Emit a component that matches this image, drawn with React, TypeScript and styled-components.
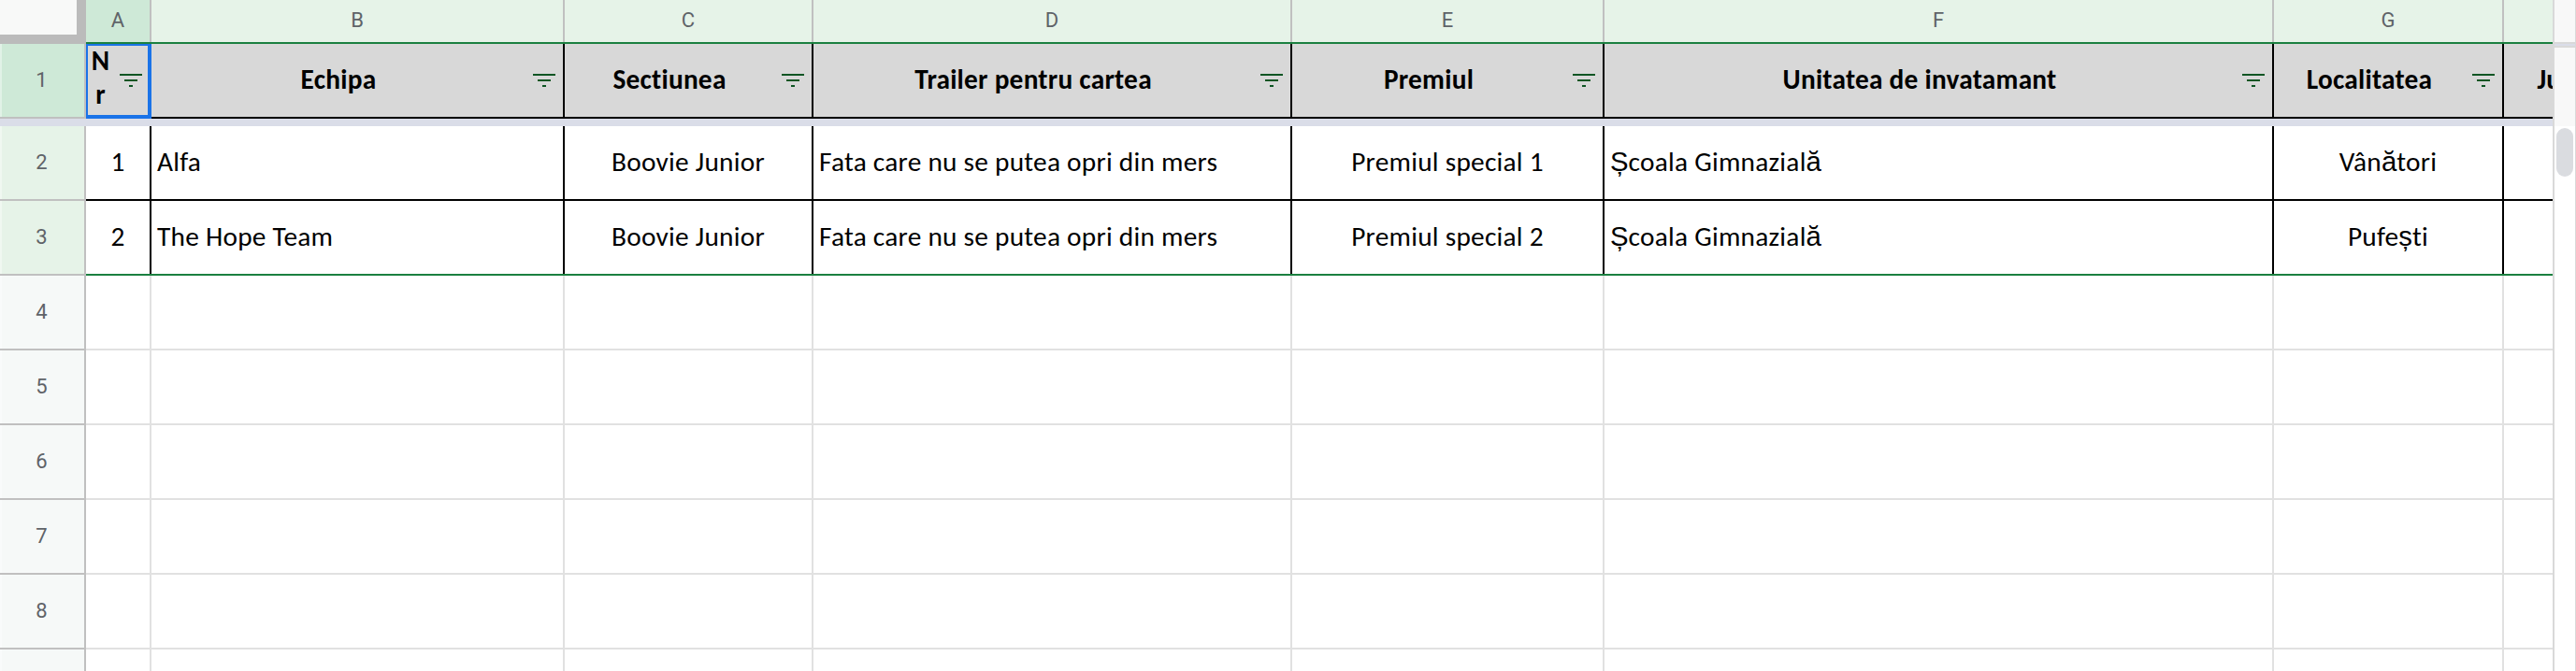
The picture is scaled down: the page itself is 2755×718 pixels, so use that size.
import React from 'react'
import styled, { createGlobalStyle, css } from 'styled-components'

const GlobalStyle = createGlobalStyle`
  body {
    margin: 0;
    background: #fff;
    overflow: hidden;
  }

  * {
    box-sizing: border-box;
  }
`

const Page = styled.div`
  display: flex;
  width: 2755px;
  height: 718px;
  overflow: hidden;
`

const Sheet = styled.div`
  width: 2730px;
  height: 718px;
  overflow: hidden;
`

const Row = styled.div<{ height: number }>`
  display: grid;
  grid-template-columns: 92px 70px 442px 266px 512px 334px 716px 246px 180px;
  height: ${({ height }) => height}px;
`

const Corner = styled.div`
  background: #f8f9f8;
  border: solid #bbbbbb;
  border-width: 0 10px 10px 0;
`

const ColumnLabel = styled.div<{ $active?: boolean }>`
  display: flex;
  align-items: center;
  justify-content: center;
  padding: 0 2px 2px 0;
  border-bottom: 2px solid #1b8040;
  background: ${({ $active }) => ($active ? '#cee9d7' : '#e6f3e8')};
  box-shadow: inset -2px 0 #c0c0c0;
  color: #5f6368;
  font-family: Roboto, sans-serif;
  font-size: 22px;
`

const rowShades = {
  active: '#cee9d7',
  filtered: '#e6f3e8',
  plain: '#f6f9f8',
}

const RowLabel = styled.div<{ $shade: keyof typeof rowShades }>`
  display: flex;
  align-items: center;
  justify-content: center;
  padding: 0 1px 1px 0;
  border-right: 2px solid #c0c0c0;
  border-bottom: 2px solid #c0c0c0;
  background: ${({ $shade }) => rowShades[$shade]};
  box-shadow: inset 2px 0 rgba(255, 255, 255, 0.4);
  color: #5f6368;
  font-family: Roboto, sans-serif;
  font-size: 22px;
`

const cellText = css`
  color: #000;
  font-family: Calibri, Carlito, Lato, sans-serif;
  font-size: 29.33px;
  letter-spacing: 0.25px;
  line-height: 36px;
`

const HeaderCell = styled.div`
  ${cellText}
  position: relative;
  display: flex;
  align-items: center;
  padding-right: 2px;
  border-bottom: 2px solid #000;
  background: #d8d8d8;
  box-shadow: inset -2px 0 #000;
  font-weight: 700;
`

const HeaderText = styled.span<{ $wrapped: boolean }>`
  flex: 1;
  min-width: 0;
  padding: ${({ $wrapped }) => ($wrapped ? '0 2px 6px 5px' : '0 4px 2px')};
  text-align: center;
  word-break: break-all;
`

const FilterButton = styled.span`
  display: flex;
  flex: none;
  width: 40px;
  padding-left: 8px;
`

const Selection = styled.div`
  position: absolute;
  top: 0;
  left: 0;
  width: 70px;
  height: 80px;
  border: solid #1a73e8;
  border-width: 2px 4px 4px 2px;
`

const FreezeBar = styled.div`
  height: 8px;
  background: #dadde8;
`

const Cell = styled.div<{ $align: string; $last: boolean }>`
  ${cellText}
  display: flex;
  align-items: center;
  justify-content: ${({ $align }) => $align};
  padding: ${({ $align }) => ($align === 'flex-start' ? '0 8px 2px 6px' : '0 2px 2px 0')};
  border-bottom: 2px solid ${({ $last }) => ($last ? '#1b8040' : '#000')};
  box-shadow: inset -2px 0 #000;
  white-space: pre;
`

const EmptyCell = styled.div`
  border-right: 2px solid #e1e1e1;
  border-bottom: 2px solid #e1e1e1;
`

const Glyph = styled.span`
  font-family: 'Liberation Sans', Arial, sans-serif;
  letter-spacing: 0;
  line-height: 0;
`

const ScrollColumn = styled.div`
  display: flex;
  flex-direction: column;
  width: 25px;
  height: 718px;
  border-left: 2px solid #d9d9d9;
  border-right: 1px solid #d9d9d9;
`

const ScrollTop = styled.div`
  height: 47px;
  border-bottom: 2px solid #d9d9d9;
  background: #f8f8f8;
`

const ScrollSplit = styled.div`
  height: 4px;
  border-bottom: 2px solid #d9d9d9;
  background: #dadde8;
`

const ScrollFrozen = styled.div`
  height: 84px;
  background: #f8f8f8;
`

const ScrollTrack = styled.div`
  flex: 1;
  padding: 2px;
  background: #fff;
`

const ScrollThumb = styled.div`
  width: 18px;
  height: 52px;
  border-radius: 9px;
  background: #dadce0;
`

const FilterIcon = () => (
  <svg width="24" height="14" viewBox="0 0 24 14" fill="#0d5523">
    <path d="M0 0h24v2H0zM5 6h14v2H5zM10 12h4v2h-4z" />
  </svg>
)

// The last column is only partly in view, so it carries no letter
const columns = ['A', 'B', 'C', 'D', 'E', 'F', 'G', '']

const headers = [
  'Nr',
  'Echipa',
  'Sectiunea',
  'Trailer pentru cartea',
  'Premiul',
  'Unitatea de invatamant',
  'Localitatea',
  'Judet',
]

const aligns = ['center', 'flex-start', 'center', 'flex-start', 'center', 'flex-start', 'center', 'center']

const teams = [
  ['1', 'Alfa', 'Boovie Junior', 'Fata care nu se putea opri din mers', 'Premiul special 1', 'Școala Gimnazială', 'Vânători', ''],
  ['2', 'The Hope Team', 'Boovie Junior', 'Fata care nu se putea opri din mers', 'Premiul special 2', 'Școala Gimnazială', 'Pufești', ''],
]

const emptyRows = ['4', '5', '6', '7', '8', '']

// Romanian letters with comma or breve are set in the sans fallback face
const renderText = (text: string) =>
  text.split(/([Șșă])/).map((part, i) => (i % 2 ? <Glyph key={i}>{part}</Glyph> : part))

const App = () => {
  return (
    <Page>
      <GlobalStyle />
      <Sheet>
        <Row height={47}>
          <Corner />
          {columns.map((name) => (
            <ColumnLabel key={name} $active={name === 'A'}>
              {name}
            </ColumnLabel>
          ))}
        </Row>
        <Row height={80}>
          <RowLabel $shade="active">1</RowLabel>
          {headers.map((title, i) => (
            <HeaderCell key={title}>
              <HeaderText $wrapped={i === 0}>{title}</HeaderText>
              <FilterButton>
                <FilterIcon />
              </FilterButton>
              {i === 0 && <Selection />}
            </HeaderCell>
          ))}
        </Row>
        <FreezeBar />
        {teams.map((team, i) => (
          <Row key={team[0]} height={80}>
            <RowLabel $shade="filtered">{i + 2}</RowLabel>
            {team.map((value, j) => (
              <Cell key={columns[j]} $align={aligns[j]} $last={i === teams.length - 1}>
                <span>{renderText(value)}</span>
              </Cell>
            ))}
          </Row>
        ))}
        {emptyRows.map((n) => (
          <Row key={n} height={80}>
            <RowLabel $shade="plain">{n}</RowLabel>
            {columns.map((name) => (
              <EmptyCell key={name} />
            ))}
          </Row>
        ))}
      </Sheet>
      <ScrollColumn>
        <ScrollTop />
        <ScrollSplit />
        <ScrollFrozen />
        <ScrollTrack>
          <ScrollThumb />
        </ScrollTrack>
      </ScrollColumn>
    </Page>
  )
}

export default App
